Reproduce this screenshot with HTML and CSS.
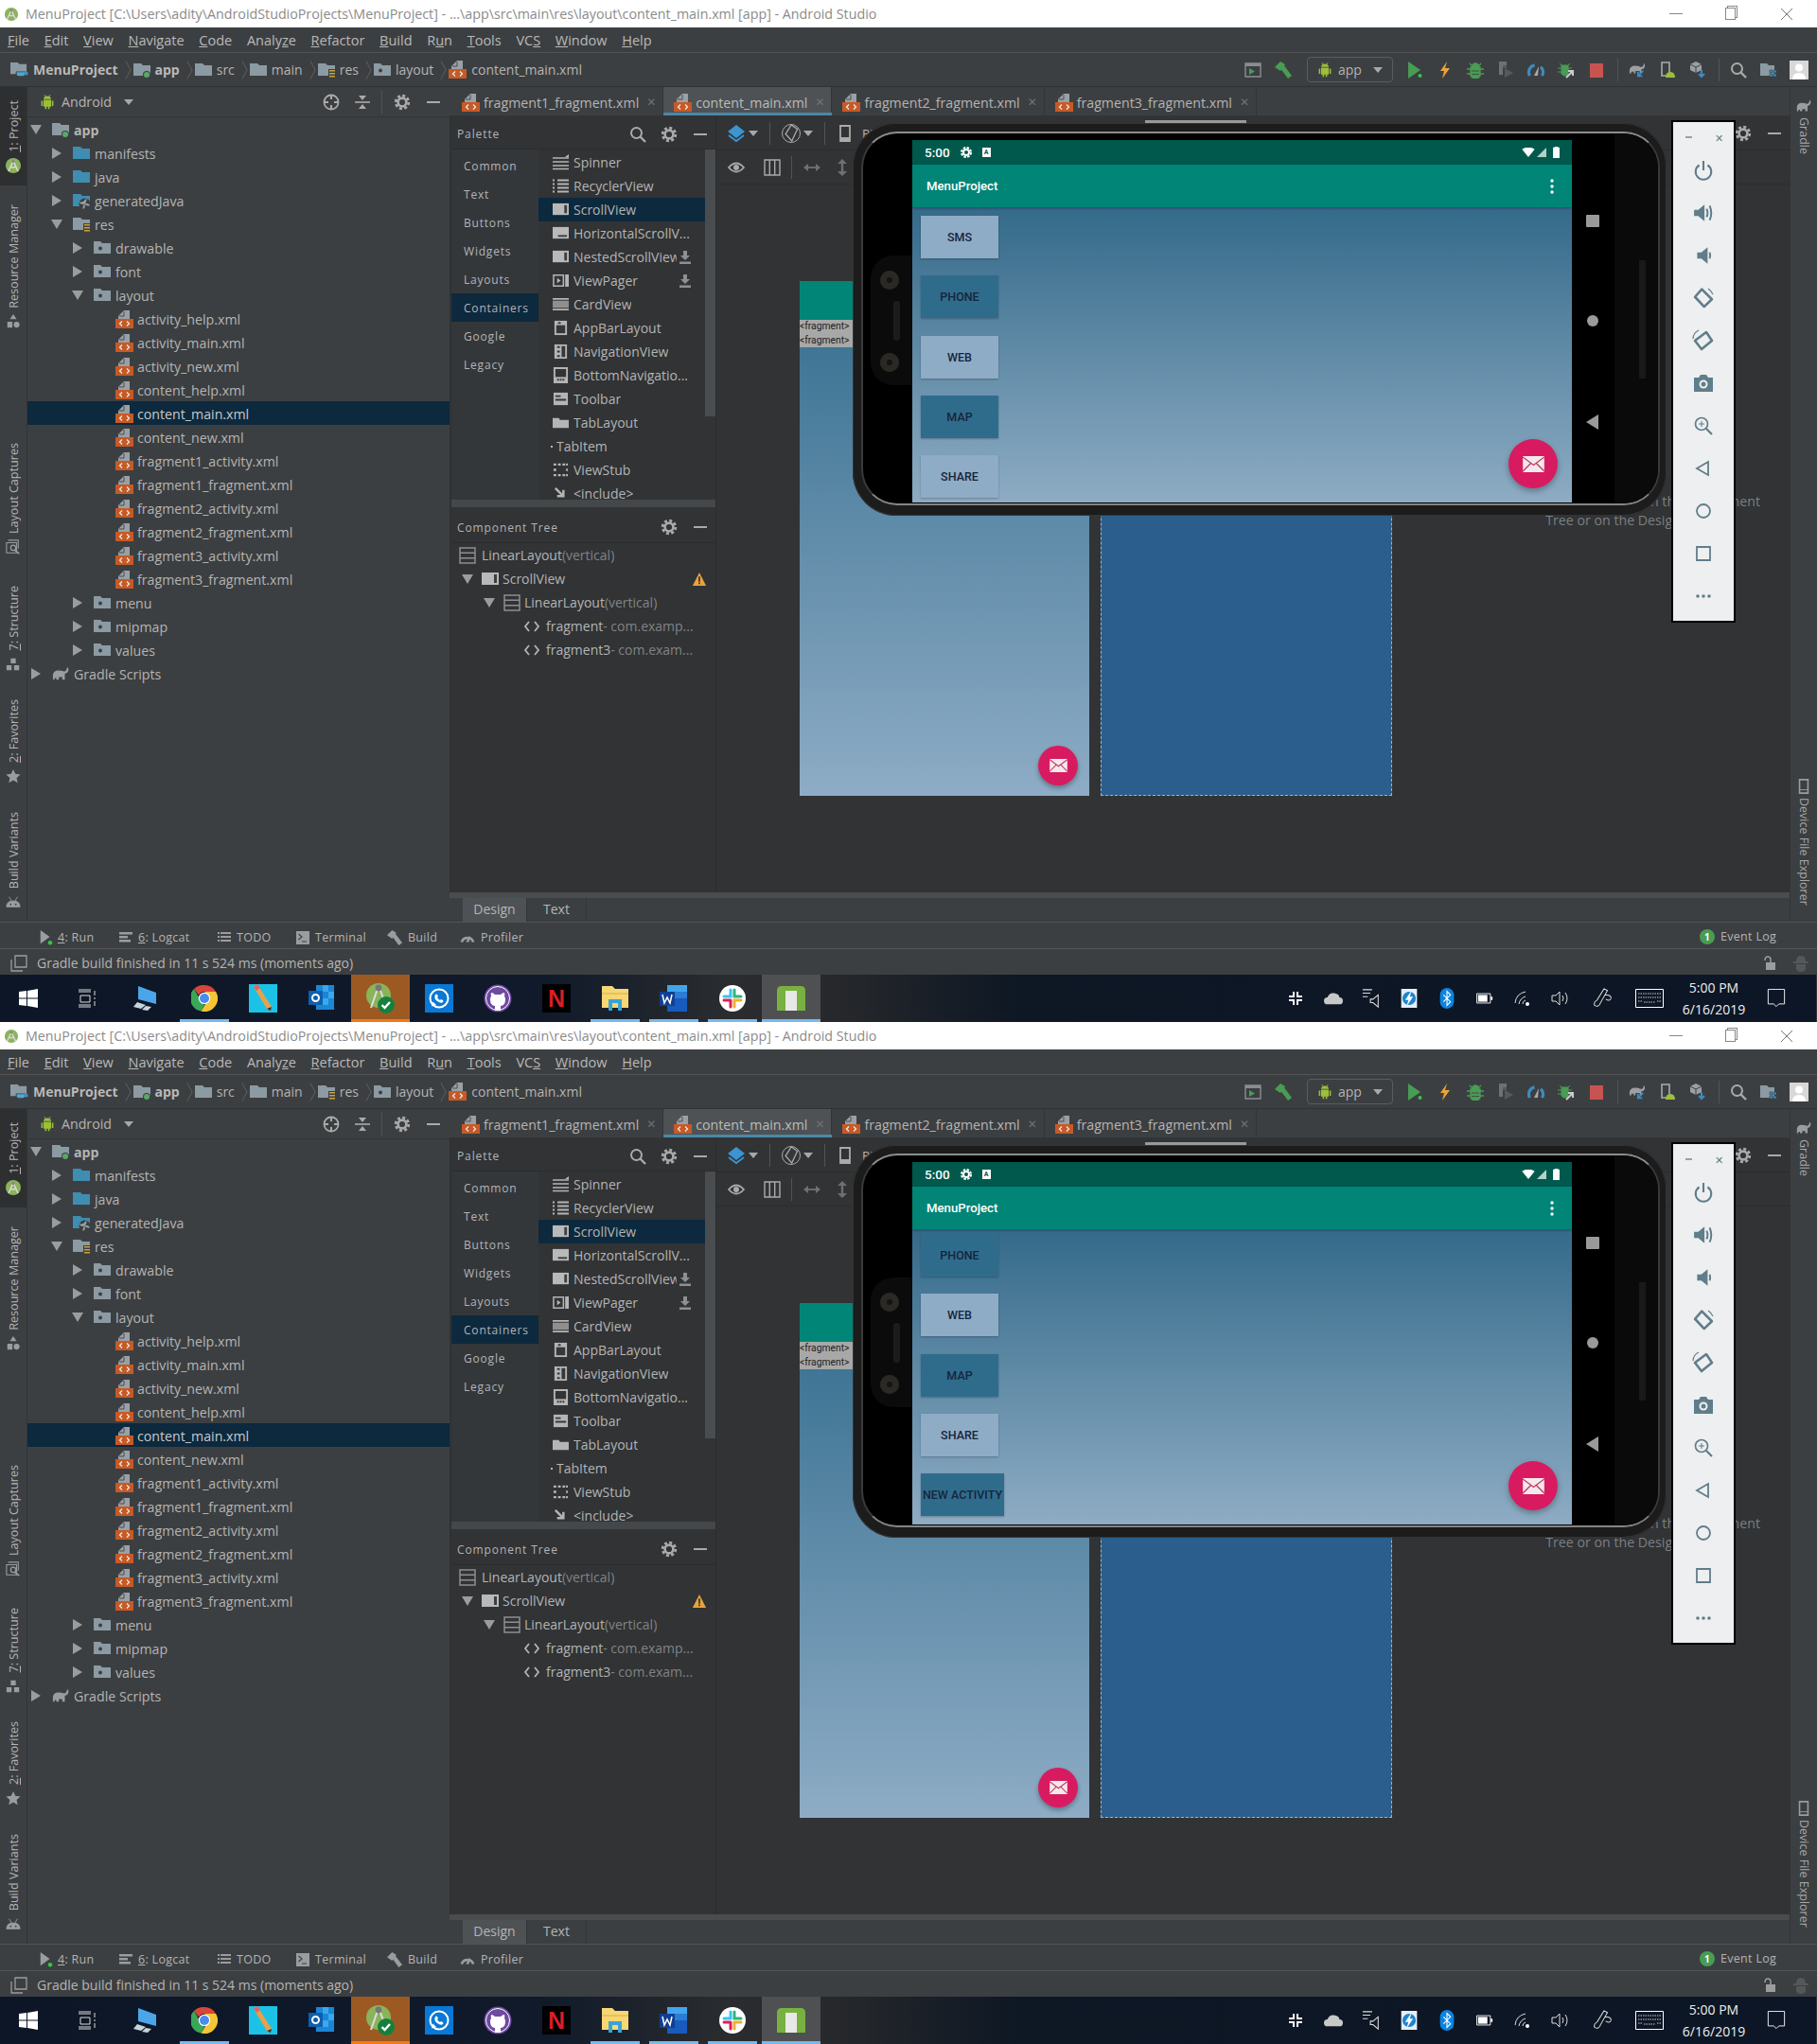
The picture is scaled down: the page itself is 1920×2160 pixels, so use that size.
FILE: index.html
```html
<!DOCTYPE html>
<html lang="en">
<head>
<meta charset="utf-8">
<title>Android Studio</title>
<link rel="stylesheet" href="styles.css">
</head>
<body>
<svg class="sprite" xmlns="http://www.w3.org/2000/svg">
<symbol id="xml" viewBox="0 0 19 19"><path d="M9 0h6v9H3V6z" fill="#9aa1a6"/><path d="M9 1v5H4" fill="none" stroke="#4a4d4f"/><path d="M0 9h19v10H0z" fill="#c65a26"/><path d="M7 11.500 4.500 14 7 16.500M12 11.500 14.500 14 12 16.500" fill="none" stroke="#eee" stroke-width="1.200"/></symbol>
<symbol id="fgray" viewBox="0 0 18 18"><path d="M0 2h8l2 2h8v11H0z" fill="#8c9aa3"/></symbol>
<symbol id="fblue" viewBox="0 0 18 18"><path d="M0 2h8l2 2h8v11H0z" fill="#3f8db0"/></symbol>
<symbol id="fdot" viewBox="0 0 18 18"><path d="M0 2h7l2 2h9v11H0z" fill="#8c9aa3"/><circle cx="7" cy="9.500" r="2" fill="#3c3f41"/></symbol>
<symbol id="fres" viewBox="0 0 18 18"><path d="M0 2h8l2 2h8v11H0z" fill="#8c9aa3"/><path d="M11 8h8v10h-8z" fill="#3c3f41"/><path d="M12 9h6v1.600h-6zM12 12h6v1.600h-6zM12 15h6v1.600h-6z" fill="#c9a23a"/></symbol>
<symbol id="fapp" viewBox="0 0 18 18"><path d="M0 2h8l2 2h8v11H0z" fill="#8c9aa3"/><circle cx="14" cy="14" r="4" fill="#3c3f41"/><circle cx="14" cy="14" r="3" fill="#59a869"/></symbol>
<symbol id="fproj" viewBox="0 0 20 18"><path d="M0 1h8l2 2h8v11H0z" fill="#8c9aa3"/><path d="M6 11h11v3q0 3-3 3H9q-3 0-3-3z" fill="#3c3f41"/><path d="M7 12h9v2q0 2-2 2H9q-2 0-2-2z" fill="#4ea6d4"/><path d="M15 12.500h4v2h-3" fill="none" stroke="#4ea6d4"/></symbol>
<symbol id="fgen" viewBox="0 0 18 18"><path d="M0 2h8l2 2h8v11H0z" fill="#3f8db0"/><circle cx="12.500" cy="12.500" r="6" fill="#3c3f41"/><path d="M12.500 12.500c-1-3 0-5 2-5.500-.2 2 0 4-2 5.500zM12.500 12.500c3-1 5 0 5.500 2-2-.2-4 0-5.500-2zM12.500 12.500c1 3 0 5-2 5.500.2-2 0-4 2-5.500zM12.500 12.500c-3 1-5 0-5.500-2 2 .2 4 0 5.500-2z" fill="#9aa1a6"/></symbol>
<symbol id="ar" viewBox="0 0 12 12"><path d="M1 0l10 6-10 6z" fill="#9a9da0"/></symbol>
<symbol id="ad" viewBox="0 0 12 12"><path d="M0 1h12L6 11z" fill="#9a9da0"/></symbol>
<symbol id="caret" viewBox="0 0 12 12"><path d="M1 3h10L6 9z" fill="#a8a8a8"/></symbol>
<symbol id="droid" viewBox="0 0 18 20"><path d="M1 8h2v7H1zM15 8h2v7h-2zM4 7h10v9h-2v3h-2v-3H8v3H6v-3H4zM4 6q.500-4 5-4t5 4z" fill="#9bbf3b"/><path d="M5 0l2 3M13 0l-2 3" stroke="#9bbf3b"/></symbol>
<symbol id="droidg" viewBox="0 0 18 14"><path d="M1 13q0-7 8-7t8 7zM4 1l3 5M14 1l-3 5" fill="#9a9da0" stroke="#9a9da0"/><circle cx="6" cy="10" r="1" fill="#3c3f41"/><circle cx="12" cy="10" r="1" fill="#3c3f41"/></symbol>
<symbol id="target" viewBox="0 0 18 18"><circle cx="9" cy="9" r="7.500" fill="none" stroke="#aaa" stroke-width="1.800"/><path d="M9 1v5M9 12v5M1 9h5M12 9h5" stroke="#aaa" stroke-width="2"/></symbol>
<symbol id="collapse" viewBox="0 0 18 18"><path d="M1 9h16" stroke="#aaa" stroke-width="1.600"/><path d="M9 7 5 2h8zM9 11l-4 5h8z" fill="#aaa"/></symbol>
<symbol id="gear" viewBox="0 0 18 18"><circle cx="9" cy="9" r="4.400" fill="none" stroke="#aaa" stroke-width="2.600"/><circle cx="9" cy="9" r="6.800" fill="none" stroke="#aaa" stroke-width="2.800" stroke-dasharray="3 2.340"/></symbol>
<symbol id="minus" viewBox="0 0 18 18"><path d="M2 8h14v2H2z" fill="#aaa"/></symbol>
<symbol id="search" viewBox="0 0 18 18"><circle cx="7.500" cy="7.500" r="5.500" fill="none" stroke="#aaa" stroke-width="2"/><path d="M11.500 11.500 17 17" stroke="#aaa" stroke-width="2.400"/></symbol>
<symbol id="runwin" viewBox="0 0 18 18"><path d="M1 2h16v14H1z" fill="none" stroke="#8a8d90" stroke-width="1.400"/><path d="M1 2h16v3H1z" fill="#8a8d90"/><path d="M5 7l6 3.500L5 14z" fill="#499c54"/></symbol>
<symbol id="hammer" viewBox="0 0 18 18"><path d="M0 6 6 0l5 3-5 7z" fill="#499c54"/><path d="M5 6 9 3l9 12-4 3z" fill="#499c54"/></symbol>
<symbol id="hammer2" viewBox="0 0 18 18"><path d="M0 6 6 0l5 3-5 7z" fill="#9a9da0"/><path d="M5 6 9 3l9 12-4 3z" fill="#9a9da0"/></symbol>
<symbol id="run" viewBox="0 0 18 18"><path d="M2 0l13 9-13 9z" fill="#499c54"/><circle cx="14.500" cy="15" r="3" fill="#3c3f41"/><circle cx="14.500" cy="15" r="2" fill="#2ecc40"/></symbol>
<symbol id="run4" viewBox="0 0 18 18"><path d="M2 0l11 8-11 8z" fill="#9a9da0"/><circle cx="13.500" cy="15" r="2.500" fill="#2ecc40"/></symbol>
<symbol id="bolt" viewBox="0 0 18 18"><path d="M11 0 4 10h4l-2 8 8-11H9z" fill="#eba43a"/></symbol>
<symbol id="bug" viewBox="0 0 18 18"><path d="M4 6h10v9q-1.500 3-5 3t-5-3zM5.500 5q1-3 3.500-3t3.500 3zM0 8h4M14 8h4M0 13h4M14 13h4M3 2l3 3M15 2l-3 3" fill="#499c54" stroke="#499c54" stroke-width="1.300"/><path d="M5 10h8M5 13.500h8" stroke="#3c3f41" stroke-width=".8"/></symbol>
<symbol id="cover" viewBox="0 0 18 18"><path d="M2 0h8v4H6v10H2z" fill="#6e7174"/><path d="M8 7l9 5-9 5z" fill="#56595b"/><path d="M6 4h4v3H6z" fill="#56595b"/></symbol>
<symbol id="gauge" viewBox="0 0 18 18"><path d="M2.500 15A7.500 7.500 0 1 1 15.500 15" fill="none" stroke="#3d8cc0" stroke-width="3.200" stroke-dasharray="14 7 20"/><path d="M7 15 12 5l-1 10z" fill="#aaa"/></symbol>
<symbol id="gauge2" viewBox="0 0 18 18"><path d="M2 14a7.500 7.500 0 0 1 14 0" fill="none" stroke="#9a9da0" stroke-width="3"/><path d="M7 14 12 6l-1 8z" fill="#9a9da0"/></symbol>
<symbol id="attach" viewBox="0 0 18 18"><path d="M4 4h7v9q-1 2-3.500 2T4 13zM0 7h4M11 7h4M0 11h4M2 2l3 3M13 2l-3 3" fill="#499c54" stroke="#499c54"/><path d="M9 17l6-6M11 10h5v5" fill="none" stroke="#ccc" stroke-width="2"/></symbol>
<symbol id="stop" viewBox="0 0 18 18"><path d="M2 2h14v15H2z" fill="#c75450"/></symbol>
<symbol id="gsync" viewBox="0 0 20 18"><path d="M1 13V9q1-5 6-5t6 1q3 1 4-1l1-3q1 1 1 4-1 3-4 3v5h-2v-3H8v3H6v-2H3v2z" fill="#9da0a3"/><path d="M17 10l-6 6M11 11v5h5" fill="none" stroke="#3d8cc0" stroke-width="2"/></symbol>
<symbol id="avd" viewBox="0 0 18 18"><path d="M3 1h8v14H3z" fill="none" stroke="#aaa" stroke-width="1.600"/><path d="M7 17q0-6 5-6t5 6zM9 9l1 2M15 9l-1 2" fill="#9bbf3b"/></symbol>
<symbol id="sdk" viewBox="0 0 18 18"><path d="M7 0l6 3v6l-6 3-6-3V3z" fill="#9da0a3"/><path d="M7 6v6M1 3l6 3 6-3" stroke="#3c3f41" fill="none"/><path d="M13 9v7M10 13l3 3 3-3" fill="none" stroke="#3d8cc0" stroke-width="2"/></symbol>
<symbol id="pstruct" viewBox="0 0 18 18"><path d="M0 2h7l2 2h6v11H0z" fill="#8c9aa3"/><path d="M10 9h3v3h-3zM14 9h3v3h-3zM10 13h3v3h-3zM14 13h3v3h-3z" fill="#3d8cc0" stroke="#3c3f41" stroke-width=".6"/></symbol>
<symbol id="user" viewBox="0 0 20 20"><path d="M0 0h20v20H0z" fill="#d8d8d8"/><circle cx="10" cy="7.500" r="4" fill="#fff"/><path d="M3 20q0-7 7-7t7 7z" fill="#fff"/></symbol>
<symbol id="as" viewBox="0 0 18 18"><circle cx="9" cy="9" r="8" fill="#8bb35b"/><path d="M9 4 4 15M9 4l5 11M6 10q3 2 6 0" fill="none" stroke="#d8d8d8" stroke-width="1.600"/><circle cx="9" cy="4.500" r="1.700" fill="#888"/></symbol>
<symbol id="resm" viewBox="0 0 18 18"><path d="M9 0l4 6H5z" fill="#9a9da0"/><path d="M2 9h6v7H2z" fill="#9a9da0"/><circle cx="13" cy="12.500" r="3.500" fill="#9a9da0"/></symbol>
<symbol id="capt" viewBox="0 0 18 18"><path d="M3 1h12v10M1 4h12v12H1z" fill="none" stroke="#9a9da0" stroke-width="1.200"/><circle cx="9" cy="10" r="3" fill="#3c3f41" stroke="#9a9da0" stroke-width="1.400"/><path d="M11 13l5 4" stroke="#9a9da0" stroke-width="2"/></symbol>
<symbol id="struct" viewBox="0 0 18 18"><path d="M6 2h6v6H6zM1 10h6v6H1zM10 10h6v6h-6z" fill="#9a9da0"/></symbol>
<symbol id="star" viewBox="0 0 18 18"><path d="M9 1l2.500 5.500 6 .7-4.500 4 1.300 6L9 14.200 3.700 17.200 5 11.200l-4.500-4 6-.7z" fill="#9a9da0"/></symbol>
<symbol id="gele" viewBox="0 0 20 16"><path d="M1 15V9q1-5 6-5t6 1q3 1 4-2l1-3q2 2 1 5-1 3-4 3v7h-3v-3H8v3H5v-2H3v2z" fill="#9a9da0"/></symbol>
<symbol id="devex" viewBox="0 0 18 18"><path d="M4 1h10v16H4z" fill="none" stroke="#9a9da0" stroke-width="1.800"/><path d="M4 13h10" stroke="#9a9da0"/></symbol>
<symbol id="spin" viewBox="0 0 17 17"><path d="M0 4h17M0 8h17M0 12h17M0 15.500h17" stroke="#b5b5b5" stroke-width="1.600"/><path d="M17 0v3h-4z" fill="#b5b5b5"/></symbol>
<symbol id="recy" viewBox="0 0 17 17"><path d="M5 2.500h12M5 6.500h12M5 10.500h12M5 14.500h12" stroke="#b5b5b5" stroke-width="2"/><path d="M0 1.500h2v2H0zM0 5.500h2v2H0zM0 9.500h2v2H0zM0 13.500h2v2H0z" fill="#b5b5b5"/></symbol>
<symbol id="scroll" viewBox="0 0 18 18"><path d="M0 2h18v13H0z" fill="#b9b9b9"/><path d="M13 4h3v9h-3z" fill="#3c3f41"/></symbol>
<symbol id="hscr" viewBox="0 0 18 18"><path d="M0 2h18v13H0z" fill="#b9b9b9"/><path d="M6 11h10v2H6z" fill="#3c3f41"/></symbol>
<symbol id="vpag" viewBox="0 0 18 18"><path d="M1 3h11v12H1z" fill="none" stroke="#b5b5b5" stroke-width="1.600"/><path d="M5 6l4 3-4 3zM14 2h4v14h-4z" fill="#b5b5b5"/></symbol>
<symbol id="card" viewBox="0 0 18 18"><path d="M0 2h18v2H0zM0 14h18v2H0z" fill="#b5b5b5"/><path d="M0 5h18v8H0z" fill="#8d8f91"/></symbol>
<symbol id="abar" viewBox="0 0 18 18"><path d="M2 1h14v16H2z" fill="#b5b5b5"/><path d="M4 6h10v9H4z" fill="#35383a"/><path d="M6 2.500h3v2H6z" fill="#35383a"/></symbol>
<symbol id="navv" viewBox="0 0 18 18"><path d="M2 1h14v16H2z" fill="#b5b5b5"/><path d="M5 3h3v2H5zM5 8h3v2H5zM5 13h3v2H5zM10 3h4v12h-4z" fill="#35383a"/></symbol>
<symbol id="bnav" viewBox="0 0 18 18"><path d="M2 1h14v16H2z" fill="none" stroke="#b5b5b5" stroke-width="2"/><path d="M2 11h14v6H2z" fill="#b5b5b5"/><path d="M5 13h2v2H5zM8 13h2v2H8zM11 13h2v2h-2z" fill="#35383a"/></symbol>
<symbol id="tbar" viewBox="0 0 18 18"><path d="M1 2h16v14H1z" fill="#b5b5b5"/><path d="M3 5h6v2H3zM3 9h12v2H3z" fill="#35383a"/></symbol>
<symbol id="tlay" viewBox="0 0 18 18"><path d="M0 4h7l1 2h10v9H0z" fill="#b5b5b5"/></symbol>
<symbol id="stub" viewBox="0 0 18 18"><path d="M1 3h3M6 3h3M11 3h3M15 3h2M1 9h3M15 9h2M1 15h3M6 15h3M11 15h3M15 15h2" stroke="#b5b5b5" stroke-width="2.400"/></symbol>
<symbol id="incl" viewBox="0 0 18 18"><path d="M3 3l9 9M12 5v7H5" fill="none" stroke="#b5b5b5" stroke-width="2.600"/></symbol>
<symbol id="dl" viewBox="0 0 14 14"><path d="M5 0h4v5h3L7 10 2 5h3zM1 11.500h12V14H1z" fill="#8d8f91"/></symbol>
<symbol id="layers" viewBox="0 0 22 22"><path d="M11 2l9 7-9 7-9-7z" fill="#3d94d0"/><path d="M3 13l8 6 8-6" fill="none" stroke="#3d94d0" stroke-width="2"/></symbol>
<symbol id="rot" viewBox="0 0 22 22"><circle cx="11" cy="11" r="9.500" fill="none" stroke="#aaa"/><path d="M5 11 12 2l6 5-7 12z" fill="#35383a" stroke="#aaa" stroke-width="1.300" transform="rotate(-5 11 11)"/></symbol>
<symbol id="phonei" viewBox="0 0 18 18"><path d="M4 1h10v16H4z" fill="none" stroke="#aaa" stroke-width="1.800"/><path d="M4 13h10v4H4z" fill="#aaa"/></symbol>
<symbol id="eye" viewBox="0 0 18 18"><path d="M1 9q8-9 16 0-8 9-16 0z" fill="none" stroke="#aaa" stroke-width="1.800"/><circle cx="9" cy="9" r="3" fill="#aaa"/></symbol>
<symbol id="cols" viewBox="0 0 18 18"><path d="M1 1h16v16H1zM6.300 1v16M11.700 1v16" fill="none" stroke="#aaa" stroke-width="1.400"/></symbol>
<symbol id="hh" viewBox="0 0 18 18"><path d="M3 9h12" stroke="#6e7174" stroke-width="1.800"/><path d="M0 9l5-4v8zM18 9l-5-4v8z" fill="#6e7174"/></symbol>
<symbol id="vv" viewBox="0 0 18 18"><path d="M9 3v12" stroke="#6e7174" stroke-width="2.400"/><path d="M9 0l5 5H4zM9 18l5-5H4z" fill="#6e7174"/></symbol>
<symbol id="lin" viewBox="0 0 18 18"><path d="M1 1h16v16H1zM1 6.300h16M1 11.700h16" fill="none" stroke="#8d8f91" stroke-width="1.500"/></symbol>
<symbol id="warn" viewBox="0 0 18 18"><path d="M9 1l8 16H1z" fill="#e8a33a"/><path d="M8 6h2v6H8zM8 13h2v2H8z" fill="#35383a"/></symbol>
<symbol id="code" viewBox="0 0 18 18"><path d="M6 4 2 9l4 5M12 4l4 5-4 5" fill="none" stroke="#b5b5b5" stroke-width="1.800"/></symbol>
<symbol id="logcat" viewBox="0 0 14 14"><path d="M0 1h14v2.500H0zM0 5h9v2.500H0zM0 9h12v2.500H0z" fill="#9a9da0"/></symbol>
<symbol id="todo" viewBox="0 0 14 14"><path d="M0 1h2v2H0zM0 5h2v2H0zM0 9h2v2H0zM3 1h11v2H3zM3 5h11v2H3zM3 9h11v2H3z" fill="#9a9da0"/></symbol>
<symbol id="term" viewBox="0 0 14 14"><path d="M0 0h14v14H0z" fill="#9a9da0"/><path d="M2.500 3 6 6 2.500 9M6 11h5" fill="none" stroke="#3c3f41" stroke-width="1.200"/></symbol>
<symbol id="frame" viewBox="0 0 18 18"><path d="M5 1h12v12H5z" fill="none" stroke="#9a9da0" stroke-width="1.300"/><path d="M1 5v12h12" fill="none" stroke="#9a9da0" stroke-width="1.300"/></symbol>
<symbol id="lock" viewBox="0 0 14 16"><path d="M2 7h10v8H2z" fill="#9a9da0"/><path d="M1 5q0-4 3-4t3 3v3" fill="none" stroke="#9a9da0" stroke-width="1.500"/></symbol>
<symbol id="hector" viewBox="0 0 16 18"><path d="M3 7q0-6 5-6t5 6h3v2H0V7zM3 10h10v5q-1 3-5 3t-5-3z" fill="#55585a"/></symbol>
<symbol id="wx" viewBox="0 0 14 14"><path d="M1 1l12 12M13 1 1 13" stroke="#777" fill="none"/></symbol>
<symbol id="mail" viewBox="0 0 24 18"><path d="M0 0h24v18H0z" fill="#f3e9ec"/><path d="M0 1l12 9 12-9M0 17l9-9M24 17l-9-9" fill="none" stroke="#c2345f" stroke-width="1.300"/></symbol>
<symbol id="win" viewBox="0 0 20 20"><path d="M0 3l8-1v7.500H0zM9 2l11-2v9.500H9zM0 10.500h8V18l-8-1zM9 10.500h11V20L9 18z" fill="#fff"/></symbol>
<symbol id="tview" viewBox="0 0 20 20"><path d="M1 1h13M1 3h13M3 7h10v7H3zM1 17h13M1 19h13M18 2v5M18 9v2M18 13v5" fill="none" stroke="#ddd"/></symbol>
<symbol id="pc" viewBox="0 0 28 28"><path d="M6 1l19 7v12L6 15z" fill="#4aa6e8"/><path d="M5 18l9 3-5 4-8-2zM14 22l6 1-4 4-6-1z" fill="#c8d4dc"/></symbol>
<symbol id="chrome" viewBox="0 0 28 28"><path d="M14 0a14 14 0 0 1 12.100 7H14a7 7 0 0 0-6.100 3.500L3 4a14 14 0 0 1 11-4z" fill="#d9453a"/><path d="M3 4l7 12.200A7 7 0 0 0 14 21l-3.500 6.600A14 14 0 0 1 3 4z" fill="#3aa757"/><path d="M26.100 7A14 14 0 0 1 10.500 27.600L17 17a7 7 0 0 0-3-10z" fill="#f4c534"/><circle cx="14" cy="14" r="6.200" fill="#fff"/><circle cx="14" cy="14" r="5" fill="#4a8bef"/></symbol>
<symbol id="pencil" viewBox="0 0 30 30"><path d="M0 0h30v30H0z" fill="#1cc2e6"/><path d="M5 3l4-3 15 24-1 4-4-2z" fill="#e8a04c"/><path d="M5 3l4-3 3 4-4 3z" fill="#d66"/><path d="M23 28l-4-2 5-2z" fill="#333"/></symbol>
<symbol id="outl" viewBox="0 0 30 30"><path d="M9 1h19v26H9z" fill="#1a86d8"/><path d="M16 1h6v7h-6zM22 8h6v7h-6zM16 15h6v7h-6z" fill="#3aa8ec"/><path d="M1 7h15v15H1z" fill="#0f5fae"/><circle cx="8.500" cy="14.500" r="3.500" fill="none" stroke="#fff" stroke-width="2"/></symbol>
<symbol id="astudio" viewBox="0 0 30 34"><circle cx="13" cy="15" r="13" fill="#8bb35b"/><path d="M13 5 5 28M13 5l7 18" fill="none" stroke="#ddd" stroke-width="2"/><circle cx="13" cy="7" r="3.400" fill="#777"/><circle cx="21" cy="25" r="9" fill="#15803d"/><path d="M16.500 25l3 3 5.500-6" fill="none" stroke="#fff" stroke-width="2.400"/></symbol>
<symbol id="wa" viewBox="0 0 30 30"><path d="M0 0h30v30H0z" fill="#0a78d4"/><circle cx="15" cy="15" r="9.500" fill="none" stroke="#fff" stroke-width="2"/><path d="M7 23.500l1.500-5 3.500 3.500zM11 11q1-1 2 0l1 2-1 1q1 2 3 3l1-1 2 1q1 1 0 2-2 2-6-1-4-3-2-7z" fill="#fff"/></symbol>
<symbol id="ghub" viewBox="0 0 30 30"><circle cx="15" cy="15" r="14.500" fill="#6e4aa0"/><circle cx="15" cy="15" r="12.500" fill="none" stroke="#fff" stroke-width="1"/><path d="M12 28v-5q-5 0-5-7 0-2 1-3-.5-2 0-4 2 0 4 2h6q2-2 4-2 .5 2 0 4 1 1 1 3 0 7-5 7v5z" fill="#fff"/></symbol>
<symbol id="expl" viewBox="0 0 30 30"><path d="M1 2h11l3 3h14v20H1z" fill="#f7d774"/><path d="M1 9h28v2H1z" fill="#e8c25a"/><path d="M8 28V16h14v12h-4v-8h-6v8z" fill="#3aa3d6"/></symbol>
<symbol id="word" viewBox="0 0 30 30"><path d="M8 1h21v28H8z" fill="#185abd"/><path d="M8 1h21v7H8z" fill="#41a5ee"/><path d="M8 8h21v7H8z" fill="#2b7cd3"/><path d="M0 8h16v15H0z" fill="#103f91"/><path d="M3 11l2 9 3-6 3 6 2-9" fill="none" stroke="#fff" stroke-width="1.500"/></symbol>
<symbol id="slack" viewBox="0 0 30 30"><circle cx="15" cy="15" r="14" fill="#fff"/><path d="M6 17h7M13 24v-7" stroke="#e01e5a" stroke-width="3" stroke-linecap="round" fill="none"/><path d="M13 6v7H6" stroke="#36c5f0" stroke-width="3" stroke-linecap="round" fill="none"/><path d="M24 13h-7V6" stroke="#2eb67d" stroke-width="3" stroke-linecap="round" fill="none"/><path d="M17 24v-7h7" stroke="#ecb22e" stroke-width="3" stroke-linecap="round" fill="none"/></symbol>
<symbol id="door" viewBox="0 0 30 26"><path d="M0 5q0-5 5-5h20q5 0 5 5v21H0z" fill="#78b13f"/><path d="M9 26V5h12v21z" fill="#e8e8e8"/></symbol>
<symbol id="tslack" viewBox="0 0 16 16"><path d="M6 1v5H1M6 15v-5H1M10 1v5h5M10 15v-5h5" stroke="#fff" stroke-width="2" fill="none"/></symbol>
<symbol id="cloud" viewBox="0 0 22 16"><path d="M4 15q-4 0-4-4t4-4q2-6 8-5t6 5q4 0 4 4t-4 4z" fill="#c8c8c8"/></symbol>
<symbol id="alist" viewBox="0 0 20 22"><path d="M0 1h11M0 5h9M0 9h6M9 12h3l6-5v14l-6-5H9z" fill="none" stroke="#ddd" stroke-width="1.200"/></symbol>
<symbol id="tbolt" viewBox="0 0 20 24"><path d="M0 0h20v24H0z" fill="#e8eef3"/><circle cx="10" cy="12" r="8.500" fill="#1a85d6"/><path d="M13 2 5 14h4l-2 8 8-12h-4z" fill="#fff"/></symbol>
<symbol id="bt" viewBox="0 0 16 24"><rect width="16" height="24" rx="8" fill="#0a84e0"/><path d="M4 8l8 8-4 4V4l4 4-8 8" fill="none" stroke="#fff" stroke-width="1.200"/></symbol>
<symbol id="batt" viewBox="0 0 20 12"><path d="M.5.500h16v11H.500z" fill="none" stroke="#fff"/><path d="M2 2h11v8H2z" fill="#fff"/><path d="M17 4h2v4h-2z" fill="#fff"/></symbol>
<symbol id="wifi" viewBox="0 0 18 18"><path d="M1 14q1-10 11-12M5 15q1-6 7-8M9 15q0-3 3-4" fill="none" stroke="#ddd"/><circle cx="14" cy="15" r="2" fill="#fff"/></symbol>
<symbol id="vol" viewBox="0 0 20 18"><path d="M1 6h4l4-4v14l-4-4H1z" fill="none" stroke="#ddd"/><path d="M12 6q2 3 0 6M15 3q4 6 0 12" fill="none" stroke="#ddd"/></symbol>
<symbol id="pen" viewBox="0 0 22 24"><path d="M1 20q-1-4 3-6l8-13 4 2-8 14q-2 6-7 3zM13 8q8 0 7 4t-6 1" fill="none" stroke="#ddd" stroke-width="1.100"/></symbol>
<symbol id="kbd" viewBox="0 0 30 20"><path d="M.5.500h29v19H.500z" fill="none" stroke="#fff"/><path d="M3 5h24M3 9h24M3 13h4M9 14h12M23 13h4" stroke="#ccc" stroke-dasharray="1.500 1"/></symbol>
<symbol id="notif" viewBox="0 0 20 22"><path d="M.5.500h19v17H13l-3 3-3-3H.500z" fill="none" stroke="#fff"/></symbol>
<symbol id="power" viewBox="0 0 20 20"><path d="M6 5a7.500 7.500 0 1 0 8 0M10 1v9" fill="none" stroke="#607d8b" stroke-width="1.900"/></symbol>
<symbol id="volu" viewBox="0 0 20 20"><path d="M1 7h4l6-5v16l-6-5H1z" fill="#607d8b"/><path d="M13 6q2 4 0 8M16 3q3 7 0 14" fill="none" stroke="#607d8b" stroke-width="1.800"/></symbol>
<symbol id="vold" viewBox="0 0 20 20"><path d="M4 7h4l6-5v16l-6-5H4z" fill="#607d8b"/><path d="M16 7q1 3 0 6" fill="none" stroke="#607d8b" stroke-width="1.800"/></symbol>
<symbol id="rotl" viewBox="0 0 24 24"><path d="M9 3 21 12l-7 9L3 12z" fill="none" stroke="#607d8b" stroke-width="2.600" stroke-linejoin="round" transform="rotate(8 12 12)"/><path d="M17 2q3 2 5 6" fill="none" stroke="#607d8b" stroke-width="1.200"/></symbol>
<symbol id="rotr" viewBox="0 0 24 24"><path d="M15 3 21 12l-11 9L3 12z" fill="none" stroke="#607d8b" stroke-width="2.600" stroke-linejoin="round"/><path d="M1 10q0-6 6-9" fill="none" stroke="#607d8b" stroke-width="1.200"/></symbol>
<symbol id="cam" viewBox="0 0 20 20"><path d="M0 4h5l2-3h6l2 3h5v15H0z" fill="#607d8b"/><circle cx="10" cy="11" r="4.500" fill="#eef0f2"/><circle cx="10" cy="11" r="2.500" fill="#607d8b"/></symbol>
<symbol id="zoom" viewBox="0 0 20 20"><circle cx="8" cy="8" r="6.500" fill="none" stroke="#607d8b" stroke-width="1.700"/><path d="M13 13l6 6" stroke="#607d8b" stroke-width="2.200"/><path d="M8 5v6M5 8h6" stroke="#607d8b" stroke-width="1.100"/></symbol>
<symbol id="back" viewBox="0 0 20 20"><path d="M15 3v14L3 10z" fill="none" stroke="#607d8b" stroke-width="1.800"/></symbol>
<symbol id="home" viewBox="0 0 20 20"><circle cx="10" cy="10" r="7" fill="none" stroke="#607d8b" stroke-width="1.800"/></symbol>
<symbol id="recent" viewBox="0 0 20 20"><path d="M3 3h14v14H3z" fill="none" stroke="#607d8b" stroke-width="1.800"/></symbol>
<symbol id="more" viewBox="0 0 20 20"><circle cx="4" cy="10" r="1.800" fill="#607d8b"/><circle cx="10" cy="10" r="1.800" fill="#607d8b"/><circle cx="16" cy="10" r="1.800" fill="#607d8b"/></symbol>
<symbol id="sbgear" viewBox="0 0 14 14"><circle cx="7" cy="7" r="3" fill="none" stroke="#fff" stroke-width="2"/><circle cx="7" cy="7" r="5" fill="none" stroke="#fff" stroke-width="2" stroke-dasharray="2.500 1.430"/></symbol>
<symbol id="sbwifi" viewBox="0 0 16 12"><path d="M0 2q8-5 16 0L8 12z" fill="#fff"/></symbol>
<symbol id="sbsig" viewBox="0 0 12 12"><path d="M12 0v12H0z" fill="#b5cfc9"/></symbol>
<symbol id="sbbat" viewBox="0 0 8 14"><path d="M2 0h4v1h2v13H0V1h2z" fill="#fff"/></symbol>
<symbol id="dots" viewBox="0 0 4 16"><circle cx="2" cy="2" r="1.700" fill="#fff"/><circle cx="2" cy="8" r="1.700" fill="#fff"/><circle cx="2" cy="14" r="1.700" fill="#fff"/></symbol>
</svg>

<section class="window">
<header class="titlebar"><svg class="ic16"><use href="#as"/></svg><span class="title-text">MenuProject [C:\Users\adity\AndroidStudioProjects\MenuProject] - ...\app\src\main\res\layout\content_main.xml [app] - Android Studio</span><div class="winctl"><span class="wc-min"></span><span class="wc-max"></span><svg class="ic14"><use href="#wx"/></svg></div></header>
<nav class="menubar"><span><u>F</u>ile</span><span><u>E</u>dit</span><span><u>V</u>iew</span><span><u>N</u>avigate</span><span><u>C</u>ode</span><span>Analy<u>z</u>e</span><span><u>R</u>efactor</span><span><u>B</u>uild</span><span>R<u>u</u>n</span><span><u>T</u>ools</span><span>VC<u>S</u></span><span><u>W</u>indow</span><span><u>H</u>elp</span></nav>
<div class="navbar">
<div class="crumbs"><svg class="ic19"><use href="#fproj"/></svg><b>MenuProject</b><i class="chev"></i><svg class="ic18"><use href="#fapp"/></svg><b>app</b><i class="chev"></i><svg class="ic18"><use href="#fgray"/></svg><span>src</span><i class="chev"></i><svg class="ic18"><use href="#fgray"/></svg><span>main</span><i class="chev"></i><svg class="ic18"><use href="#fres"/></svg><span>res</span><i class="chev"></i><svg class="ic18"><use href="#fdot"/></svg><span>layout</span><i class="chev"></i><svg class="ic19"><use href="#xml"/></svg><span>content_main.xml</span></div>
<div class="tools"><span class="slot"><svg class="ic18"><use href="#runwin"/></svg></span><span class="slot"><svg class="ic18"><use href="#hammer"/></svg></span><span class="appbox"><svg class="ic16"><use href="#droid"/></svg><span>app</span><svg class="ic12"><use href="#caret"/></svg></span><span class="slot"><svg class="ic18"><use href="#run"/></svg></span><span class="slot"><svg class="ic18"><use href="#bolt"/></svg></span><span class="slot"><svg class="ic18"><use href="#bug"/></svg></span><span class="slot"><svg class="ic18"><use href="#cover"/></svg></span><span class="slot"><svg class="ic18"><use href="#gauge"/></svg></span><span class="slot"><svg class="ic18"><use href="#attach"/></svg></span><span class="slot"><svg class="ic18"><use href="#stop"/></svg></span><i class="tsep"></i><span class="slot"><svg class="ic18"><use href="#gsync"/></svg></span><span class="slot"><svg class="ic18"><use href="#avd"/></svg></span><span class="slot"><svg class="ic18"><use href="#sdk"/></svg></span><i class="tsep"></i><span class="slot"><svg class="ic18"><use href="#search"/></svg></span><span class="slot"><svg class="ic18"><use href="#pstruct"/></svg></span><span class="slot"><svg class="ic20"><use href="#user"/></svg></span></div>
</div>
<div class="workspace">
<aside class="stripe-left">
<div class="sitem active"><span class="vtext"><u>1</u>: Project</span><svg class="ic18"><use href="#as"/></svg></div>
<div class="sitem"><span class="vtext">Resource Manager</span><svg class="ic16"><use href="#resm"/></svg></div>
<div class="sitem"><span class="vtext">Layout Captures</span><svg class="ic16"><use href="#capt"/></svg></div>
<div class="sitem"><span class="vtext"><u>7</u>: Structure</span><svg class="ic16"><use href="#struct"/></svg></div>
<div class="sitem"><span class="vtext"><u>2</u>: Favorites</span><svg class="ic16"><use href="#star"/></svg></div>
<div class="sitem"><span class="vtext">Build Variants</span><svg class="ic16"><use href="#droidg"/></svg></div>
</aside>
<section class="project">
<div class="proj-head"><svg class="ic16 a-icon"><use href="#droid"/></svg><span class="proj-name">Android</span><svg class="ic12"><use href="#caret"/></svg><div class="proj-tools"><svg class="ic18"><use href="#target"/></svg><svg class="ic18"><use href="#collapse"/></svg><i class="hsep"></i><svg class="ic18"><use href="#gear"/></svg><svg class="ic18"><use href="#minus"/></svg></div></div>
<div class="tree">
<div class="row l0"><svg class="arrow"><use href="#ad"/></svg><svg class="ic18"><use href="#fapp"/></svg><b>app</b></div>
<div class="row l1"><svg class="arrow"><use href="#ar"/></svg><svg class="ic18"><use href="#fblue"/></svg><span>manifests</span></div>
<div class="row l1"><svg class="arrow"><use href="#ar"/></svg><svg class="ic18"><use href="#fblue"/></svg><span>java</span></div>
<div class="row l1"><svg class="arrow"><use href="#ar"/></svg><svg class="ic18"><use href="#fgen"/></svg><span>generatedJava</span></div>
<div class="row l1"><svg class="arrow"><use href="#ad"/></svg><svg class="ic18"><use href="#fres"/></svg><span>res</span></div>
<div class="row l2"><svg class="arrow"><use href="#ar"/></svg><svg class="ic18"><use href="#fdot"/></svg><span>drawable</span></div>
<div class="row l2"><svg class="arrow"><use href="#ar"/></svg><svg class="ic18"><use href="#fdot"/></svg><span>font</span></div>
<div class="row l2"><svg class="arrow"><use href="#ad"/></svg><svg class="ic18"><use href="#fdot"/></svg><span>layout</span></div>
<div class="row l3"><svg class="ic19"><use href="#xml"/></svg><span>activity_help.xml</span></div>
<div class="row l3"><svg class="ic19"><use href="#xml"/></svg><span>activity_main.xml</span></div>
<div class="row l3"><svg class="ic19"><use href="#xml"/></svg><span>activity_new.xml</span></div>
<div class="row l3"><svg class="ic19"><use href="#xml"/></svg><span>content_help.xml</span></div>
<div class="row l3 sel"><svg class="ic19"><use href="#xml"/></svg><span>content_main.xml</span></div>
<div class="row l3"><svg class="ic19"><use href="#xml"/></svg><span>content_new.xml</span></div>
<div class="row l3"><svg class="ic19"><use href="#xml"/></svg><span>fragment1_activity.xml</span></div>
<div class="row l3"><svg class="ic19"><use href="#xml"/></svg><span>fragment1_fragment.xml</span></div>
<div class="row l3"><svg class="ic19"><use href="#xml"/></svg><span>fragment2_activity.xml</span></div>
<div class="row l3"><svg class="ic19"><use href="#xml"/></svg><span>fragment2_fragment.xml</span></div>
<div class="row l3"><svg class="ic19"><use href="#xml"/></svg><span>fragment3_activity.xml</span></div>
<div class="row l3"><svg class="ic19"><use href="#xml"/></svg><span>fragment3_fragment.xml</span></div>
<div class="row l2"><svg class="arrow"><use href="#ar"/></svg><svg class="ic18"><use href="#fdot"/></svg><span>menu</span></div>
<div class="row l2"><svg class="arrow"><use href="#ar"/></svg><svg class="ic18"><use href="#fdot"/></svg><span>mipmap</span></div>
<div class="row l2"><svg class="arrow"><use href="#ar"/></svg><svg class="ic18"><use href="#fdot"/></svg><span>values</span></div>
<div class="row l0"><svg class="arrow"><use href="#ar"/></svg><svg class="ic18"><use href="#gele"/></svg><span>Gradle Scripts</span></div>
</div>
</section>
<section class="editor">
<div class="tabs">
<div class="tab"><svg class="ic19"><use href="#xml"/></svg><span>fragment1_fragment.xml</span><em>&#10005;</em></div>
<div class="tab on"><svg class="ic19"><use href="#xml"/></svg><span>content_main.xml</span><em>&#10005;</em></div>
<div class="tab"><svg class="ic19"><use href="#xml"/></svg><span>fragment2_fragment.xml</span><em>&#10005;</em></div>
<div class="tab"><svg class="ic19"><use href="#xml"/></svg><span>fragment3_fragment.xml</span><em>&#10005;</em></div>
</div>
<div class="design">
<div class="left-col">
<div class="palette">
<div class="ph"><span class="ph-title">Palette</span><svg class="ic18"><use href="#search"/></svg><svg class="ic18"><use href="#gear"/></svg><svg class="ic18"><use href="#minus"/></svg></div>
<div class="pbody">
<div class="pcats"><span>Common</span><span>Text</span><span>Buttons</span><span>Widgets</span><span>Layouts</span><span class="on">Containers</span><span>Google</span><span>Legacy</span></div>
<div class="pitems">
<div class="pi"><svg class="ic17"><use href="#spin"/></svg><span>Spinner</span></div>
<div class="pi"><svg class="ic17"><use href="#recy"/></svg><span>RecyclerView</span></div>
<div class="pi on"><svg class="ic17"><use href="#scroll"/></svg><span>ScrollView</span></div>
<div class="pi"><svg class="ic17"><use href="#hscr"/></svg><span>HorizontalScrollV...</span></div>
<div class="pi nest"><svg class="ic17"><use href="#scroll"/></svg><span>NestedScrollView</span><svg class="dl"><use href="#dl"/></svg></div>
<div class="pi"><svg class="ic17"><use href="#vpag"/></svg><span>ViewPager</span><svg class="dl"><use href="#dl"/></svg></div>
<div class="pi"><svg class="ic17"><use href="#card"/></svg><span>CardView</span></div>
<div class="pi"><svg class="ic17"><use href="#abar"/></svg><span>AppBarLayout</span></div>
<div class="pi"><svg class="ic17"><use href="#navv"/></svg><span>NavigationView</span></div>
<div class="pi"><svg class="ic17"><use href="#bnav"/></svg><span>BottomNavigatio...</span></div>
<div class="pi"><svg class="ic17"><use href="#tbar"/></svg><span>Toolbar</span></div>
<div class="pi"><svg class="ic17"><use href="#tlay"/></svg><span>TabLayout</span></div>
<div class="pi noicon"><span>TabItem</span></div>
<div class="pi"><svg class="ic17"><use href="#stub"/></svg><span>ViewStub</span></div>
<div class="pi"><svg class="ic17"><use href="#incl"/></svg><span>&lt;include&gt;</span></div>
</div>
<div class="pscroll"><i></i></div>
</div>
</div>
<div class="split"></div>
<div class="ctree">
<div class="ph ch"><span class="ph-title">Component Tree</span><svg class="ic18"><use href="#gear"/></svg><svg class="ic18"><use href="#minus"/></svg></div>
<div class="crow c0"><svg class="ic18"><use href="#lin"/></svg><span>LinearLayout<small>(vertical)</small></span></div>
<div class="crow c1"><svg class="arrow"><use href="#ad"/></svg><svg class="ic18"><use href="#scroll"/></svg><span>ScrollView</span><svg class="ic16 warn"><use href="#warn"/></svg></div>
<div class="crow c2"><svg class="arrow"><use href="#ad"/></svg><svg class="ic18"><use href="#lin"/></svg><span>LinearLayout<small>(vertical)</small></span></div>
<div class="crow c3"><svg class="ic18"><use href="#code"/></svg><span>fragment<small>- com.examp...</small></span></div>
<div class="crow c3"><svg class="ic18"><use href="#code"/></svg><span>fragment3<small>- com.exam...</small></span></div>
</div>
</div>
<div class="surface">
<div class="dbar d1"><svg class="ic22"><use href="#layers"/></svg><svg class="ic12"><use href="#caret"/></svg><i class="dsep"></i><svg class="ic22"><use href="#rot"/></svg><svg class="ic12"><use href="#caret"/></svg><i class="dsep"></i><svg class="ic18"><use href="#phonei"/></svg><span class="dlabel">Pixel</span><div class="dright"><svg class="ic18"><use href="#gear"/></svg><svg class="ic18"><use href="#minus"/></svg></div></div>
<div class="dbar d2"><svg class="ic18"><use href="#eye"/></svg><svg class="ic18"><use href="#cols"/></svg><i class="dsep"></i><svg class="ic18"><use href="#hh"/></svg><svg class="ic18"><use href="#vv"/></svg></div>
<div class="canvas">
<div class="screen-a"><div class="teal"></div><div class="frag"><span>&lt;fragment&gt;</span><span>&lt;fragment&gt;</span></div><div class="grad"></div><div class="fab-s"><svg class="mail-s"><use href="#mail"/></svg></div></div>
<div class="screen-b"></div>
<p class="hint">Select a component in the Component<br>Tree or on the Design Surface.</p>
</div>
</div>
</div>
<div class="dtabs"><span class="on">Design</span><span>Text</span></div>
</section>
<aside class="stripe-right"><div class="ritem"><svg class="ic16"><use href="#gele"/></svg><span class="vtext-r">Gradle</span></div><div class="ritem"><svg class="ic16"><use href="#devex"/></svg><span class="vtext-r">Device File Explorer</span></div></aside>
</div>
<div class="toolwins"><span class="tw tw1"><svg class="ic16"><use href="#run4"/></svg><span><u>4</u>: Run</span></span><span class="tw tw2"><svg class="ic14"><use href="#logcat"/></svg><span><u>6</u>: Logcat</span></span><span class="tw tw3"><svg class="ic14"><use href="#todo"/></svg><span>TODO</span></span><span class="tw tw4"><svg class="ic14"><use href="#term"/></svg><span>Terminal</span></span><span class="tw tw5"><svg class="ic16"><use href="#hammer2"/></svg><span>Build</span></span><span class="tw tw6"><svg class="ic16"><use href="#gauge2"/></svg><span>Profiler</span></span><span class="evlog"><i class="badge">1</i><span>Event Log</span></span></div>
<footer class="status"><svg class="ic18"><use href="#frame"/></svg><span class="st-text">Gradle build finished in 11 s 524 ms (moments ago)</span><div class="st-right"><svg class="ic16"><use href="#lock"/></svg><svg class="ic18"><use href="#hector"/></svg></div></footer>
<div class="taskbar">
<span class="tk"><svg class="ic20"><use href="#win"/></svg></span><span class="tk"><svg class="ic20"><use href="#tview"/></svg></span><span class="tk"><svg class="ic28"><use href="#pc"/></svg></span><span class="tk run"><svg class="ic28"><use href="#chrome"/></svg></span><span class="tk"><svg class="ic30"><use href="#pencil"/></svg></span><span class="tk"><svg class="ic30"><use href="#outl"/></svg></span><span class="tk act"><svg class="ic34"><use href="#astudio"/></svg></span><span class="tk"><svg class="ic30"><use href="#wa"/></svg></span><span class="tk"><svg class="ic30"><use href="#ghub"/></svg></span><span class="tk"><span class="nflx">N</span></span><span class="tk run"><svg class="ic30"><use href="#expl"/></svg></span><span class="tk run"><svg class="ic30"><use href="#word"/></svg></span><span class="tk run"><svg class="ic30"><use href="#slack"/></svg></span><span class="tk cur"><svg class="ic30"><use href="#door"/></svg></span>
<div class="tray"><span class="ts"><svg class="ic16"><use href="#tslack"/></svg></span><span class="ts"><svg class="ic20"><use href="#cloud"/></svg></span><span class="ts"><svg class="ic20"><use href="#alist"/></svg></span><span class="ts"><svg class="ic20"><use href="#tbolt"/></svg></span><span class="ts"><svg class="ic22"><use href="#bt"/></svg></span><span class="ts"><svg class="ic18"><use href="#batt"/></svg></span><span class="ts"><svg class="ic18"><use href="#wifi"/></svg></span><span class="ts"><svg class="ic20"><use href="#vol"/></svg></span><span class="ts ts-pen"><svg class="ic22"><use href="#pen"/></svg></span><span class="ts ts-kbd"><svg class="ic30"><use href="#kbd"/></svg></span><span class="clock"><span>5:00 PM</span><span>6/16/2019</span></span><span class="ts ts-n"><svg class="ic20"><use href="#notif"/></svg></span></div>
</div>
<div class="phone">
<i class="pbtn pb1"></i><i class="pbtn pb2"></i>
<div class="bezel">
<div class="bz-left"><div class="notch"><i class="camera c-a"></i><i class="speaker"></i><i class="camera c-b"></i></div></div>
<div class="scr">
<div class="sb"><span class="sb-time">5:00</span><svg class="ic14"><use href="#sbgear"/></svg><span class="sb-a">A</span><div class="sb-right"><svg class="sbw"><use href="#sbwifi"/></svg><svg class="sbs"><use href="#sbsig"/></svg><svg class="sbb"><use href="#sbbat"/></svg></div></div>
<div class="ab"><span>MenuProject</span><svg class="dots"><use href="#dots"/></svg></div>
<div class="content pos-a"><div class="btn lt">SMS</div><div class="btn dk">PHONE</div><div class="btn lt">WEB</div><div class="btn dk">MAP</div><div class="btn lt">SHARE</div></div>
<div class="fab"><svg class="mail"><use href="#mail"/></svg></div>
</div>
<div class="bz-nav"><i class="nav-sq"></i><i class="nav-ci"></i><i class="nav-tr"></i></div>
<div class="bz-right"><i class="rspeaker"></i></div>
</div>
</div>
<div class="emu">
<div class="emu-top"><span class="emu-min"></span><span class="emu-x">&#10005;</span></div>
<span class="eb"><svg class="ic22"><use href="#power"/></svg></span><span class="eb"><svg class="ic22"><use href="#volu"/></svg></span><span class="eb"><svg class="ic22"><use href="#vold"/></svg></span><span class="eb"><svg class="ic24"><use href="#rotl"/></svg></span><span class="eb"><svg class="ic24"><use href="#rotr"/></svg></span><span class="eb"><svg class="ic20"><use href="#cam"/></svg></span><span class="eb"><svg class="ic20"><use href="#zoom"/></svg></span><span class="eb"><svg class="ic20"><use href="#back"/></svg></span><span class="eb"><svg class="ic20"><use href="#home"/></svg></span><span class="eb"><svg class="ic20"><use href="#recent"/></svg></span><span class="eb"><svg class="ic20"><use href="#more"/></svg></span>
</div>
</section>

<section class="window">
<header class="titlebar"><svg class="ic16"><use href="#as"/></svg><span class="title-text">MenuProject [C:\Users\adity\AndroidStudioProjects\MenuProject] - ...\app\src\main\res\layout\content_main.xml [app] - Android Studio</span><div class="winctl"><span class="wc-min"></span><span class="wc-max"></span><svg class="ic14"><use href="#wx"/></svg></div></header>
<nav class="menubar"><span><u>F</u>ile</span><span><u>E</u>dit</span><span><u>V</u>iew</span><span><u>N</u>avigate</span><span><u>C</u>ode</span><span>Analy<u>z</u>e</span><span><u>R</u>efactor</span><span><u>B</u>uild</span><span>R<u>u</u>n</span><span><u>T</u>ools</span><span>VC<u>S</u></span><span><u>W</u>indow</span><span><u>H</u>elp</span></nav>
<div class="navbar">
<div class="crumbs"><svg class="ic19"><use href="#fproj"/></svg><b>MenuProject</b><i class="chev"></i><svg class="ic18"><use href="#fapp"/></svg><b>app</b><i class="chev"></i><svg class="ic18"><use href="#fgray"/></svg><span>src</span><i class="chev"></i><svg class="ic18"><use href="#fgray"/></svg><span>main</span><i class="chev"></i><svg class="ic18"><use href="#fres"/></svg><span>res</span><i class="chev"></i><svg class="ic18"><use href="#fdot"/></svg><span>layout</span><i class="chev"></i><svg class="ic19"><use href="#xml"/></svg><span>content_main.xml</span></div>
<div class="tools"><span class="slot"><svg class="ic18"><use href="#runwin"/></svg></span><span class="slot"><svg class="ic18"><use href="#hammer"/></svg></span><span class="appbox"><svg class="ic16"><use href="#droid"/></svg><span>app</span><svg class="ic12"><use href="#caret"/></svg></span><span class="slot"><svg class="ic18"><use href="#run"/></svg></span><span class="slot"><svg class="ic18"><use href="#bolt"/></svg></span><span class="slot"><svg class="ic18"><use href="#bug"/></svg></span><span class="slot"><svg class="ic18"><use href="#cover"/></svg></span><span class="slot"><svg class="ic18"><use href="#gauge"/></svg></span><span class="slot"><svg class="ic18"><use href="#attach"/></svg></span><span class="slot"><svg class="ic18"><use href="#stop"/></svg></span><i class="tsep"></i><span class="slot"><svg class="ic18"><use href="#gsync"/></svg></span><span class="slot"><svg class="ic18"><use href="#avd"/></svg></span><span class="slot"><svg class="ic18"><use href="#sdk"/></svg></span><i class="tsep"></i><span class="slot"><svg class="ic18"><use href="#search"/></svg></span><span class="slot"><svg class="ic18"><use href="#pstruct"/></svg></span><span class="slot"><svg class="ic20"><use href="#user"/></svg></span></div>
</div>
<div class="workspace">
<aside class="stripe-left">
<div class="sitem active"><span class="vtext"><u>1</u>: Project</span><svg class="ic18"><use href="#as"/></svg></div>
<div class="sitem"><span class="vtext">Resource Manager</span><svg class="ic16"><use href="#resm"/></svg></div>
<div class="sitem"><span class="vtext">Layout Captures</span><svg class="ic16"><use href="#capt"/></svg></div>
<div class="sitem"><span class="vtext"><u>7</u>: Structure</span><svg class="ic16"><use href="#struct"/></svg></div>
<div class="sitem"><span class="vtext"><u>2</u>: Favorites</span><svg class="ic16"><use href="#star"/></svg></div>
<div class="sitem"><span class="vtext">Build Variants</span><svg class="ic16"><use href="#droidg"/></svg></div>
</aside>
<section class="project">
<div class="proj-head"><svg class="ic16 a-icon"><use href="#droid"/></svg><span class="proj-name">Android</span><svg class="ic12"><use href="#caret"/></svg><div class="proj-tools"><svg class="ic18"><use href="#target"/></svg><svg class="ic18"><use href="#collapse"/></svg><i class="hsep"></i><svg class="ic18"><use href="#gear"/></svg><svg class="ic18"><use href="#minus"/></svg></div></div>
<div class="tree">
<div class="row l0"><svg class="arrow"><use href="#ad"/></svg><svg class="ic18"><use href="#fapp"/></svg><b>app</b></div>
<div class="row l1"><svg class="arrow"><use href="#ar"/></svg><svg class="ic18"><use href="#fblue"/></svg><span>manifests</span></div>
<div class="row l1"><svg class="arrow"><use href="#ar"/></svg><svg class="ic18"><use href="#fblue"/></svg><span>java</span></div>
<div class="row l1"><svg class="arrow"><use href="#ar"/></svg><svg class="ic18"><use href="#fgen"/></svg><span>generatedJava</span></div>
<div class="row l1"><svg class="arrow"><use href="#ad"/></svg><svg class="ic18"><use href="#fres"/></svg><span>res</span></div>
<div class="row l2"><svg class="arrow"><use href="#ar"/></svg><svg class="ic18"><use href="#fdot"/></svg><span>drawable</span></div>
<div class="row l2"><svg class="arrow"><use href="#ar"/></svg><svg class="ic18"><use href="#fdot"/></svg><span>font</span></div>
<div class="row l2"><svg class="arrow"><use href="#ad"/></svg><svg class="ic18"><use href="#fdot"/></svg><span>layout</span></div>
<div class="row l3"><svg class="ic19"><use href="#xml"/></svg><span>activity_help.xml</span></div>
<div class="row l3"><svg class="ic19"><use href="#xml"/></svg><span>activity_main.xml</span></div>
<div class="row l3"><svg class="ic19"><use href="#xml"/></svg><span>activity_new.xml</span></div>
<div class="row l3"><svg class="ic19"><use href="#xml"/></svg><span>content_help.xml</span></div>
<div class="row l3 sel"><svg class="ic19"><use href="#xml"/></svg><span>content_main.xml</span></div>
<div class="row l3"><svg class="ic19"><use href="#xml"/></svg><span>content_new.xml</span></div>
<div class="row l3"><svg class="ic19"><use href="#xml"/></svg><span>fragment1_activity.xml</span></div>
<div class="row l3"><svg class="ic19"><use href="#xml"/></svg><span>fragment1_fragment.xml</span></div>
<div class="row l3"><svg class="ic19"><use href="#xml"/></svg><span>fragment2_activity.xml</span></div>
<div class="row l3"><svg class="ic19"><use href="#xml"/></svg><span>fragment2_fragment.xml</span></div>
<div class="row l3"><svg class="ic19"><use href="#xml"/></svg><span>fragment3_activity.xml</span></div>
<div class="row l3"><svg class="ic19"><use href="#xml"/></svg><span>fragment3_fragment.xml</span></div>
<div class="row l2"><svg class="arrow"><use href="#ar"/></svg><svg class="ic18"><use href="#fdot"/></svg><span>menu</span></div>
<div class="row l2"><svg class="arrow"><use href="#ar"/></svg><svg class="ic18"><use href="#fdot"/></svg><span>mipmap</span></div>
<div class="row l2"><svg class="arrow"><use href="#ar"/></svg><svg class="ic18"><use href="#fdot"/></svg><span>values</span></div>
<div class="row l0"><svg class="arrow"><use href="#ar"/></svg><svg class="ic18"><use href="#gele"/></svg><span>Gradle Scripts</span></div>
</div>
</section>
<section class="editor">
<div class="tabs">
<div class="tab"><svg class="ic19"><use href="#xml"/></svg><span>fragment1_fragment.xml</span><em>&#10005;</em></div>
<div class="tab on"><svg class="ic19"><use href="#xml"/></svg><span>content_main.xml</span><em>&#10005;</em></div>
<div class="tab"><svg class="ic19"><use href="#xml"/></svg><span>fragment2_fragment.xml</span><em>&#10005;</em></div>
<div class="tab"><svg class="ic19"><use href="#xml"/></svg><span>fragment3_fragment.xml</span><em>&#10005;</em></div>
</div>
<div class="design">
<div class="left-col">
<div class="palette">
<div class="ph"><span class="ph-title">Palette</span><svg class="ic18"><use href="#search"/></svg><svg class="ic18"><use href="#gear"/></svg><svg class="ic18"><use href="#minus"/></svg></div>
<div class="pbody">
<div class="pcats"><span>Common</span><span>Text</span><span>Buttons</span><span>Widgets</span><span>Layouts</span><span class="on">Containers</span><span>Google</span><span>Legacy</span></div>
<div class="pitems">
<div class="pi"><svg class="ic17"><use href="#spin"/></svg><span>Spinner</span></div>
<div class="pi"><svg class="ic17"><use href="#recy"/></svg><span>RecyclerView</span></div>
<div class="pi on"><svg class="ic17"><use href="#scroll"/></svg><span>ScrollView</span></div>
<div class="pi"><svg class="ic17"><use href="#hscr"/></svg><span>HorizontalScrollV...</span></div>
<div class="pi nest"><svg class="ic17"><use href="#scroll"/></svg><span>NestedScrollView</span><svg class="dl"><use href="#dl"/></svg></div>
<div class="pi"><svg class="ic17"><use href="#vpag"/></svg><span>ViewPager</span><svg class="dl"><use href="#dl"/></svg></div>
<div class="pi"><svg class="ic17"><use href="#card"/></svg><span>CardView</span></div>
<div class="pi"><svg class="ic17"><use href="#abar"/></svg><span>AppBarLayout</span></div>
<div class="pi"><svg class="ic17"><use href="#navv"/></svg><span>NavigationView</span></div>
<div class="pi"><svg class="ic17"><use href="#bnav"/></svg><span>BottomNavigatio...</span></div>
<div class="pi"><svg class="ic17"><use href="#tbar"/></svg><span>Toolbar</span></div>
<div class="pi"><svg class="ic17"><use href="#tlay"/></svg><span>TabLayout</span></div>
<div class="pi noicon"><span>TabItem</span></div>
<div class="pi"><svg class="ic17"><use href="#stub"/></svg><span>ViewStub</span></div>
<div class="pi"><svg class="ic17"><use href="#incl"/></svg><span>&lt;include&gt;</span></div>
</div>
<div class="pscroll"><i></i></div>
</div>
</div>
<div class="split"></div>
<div class="ctree">
<div class="ph ch"><span class="ph-title">Component Tree</span><svg class="ic18"><use href="#gear"/></svg><svg class="ic18"><use href="#minus"/></svg></div>
<div class="crow c0"><svg class="ic18"><use href="#lin"/></svg><span>LinearLayout<small>(vertical)</small></span></div>
<div class="crow c1"><svg class="arrow"><use href="#ad"/></svg><svg class="ic18"><use href="#scroll"/></svg><span>ScrollView</span><svg class="ic16 warn"><use href="#warn"/></svg></div>
<div class="crow c2"><svg class="arrow"><use href="#ad"/></svg><svg class="ic18"><use href="#lin"/></svg><span>LinearLayout<small>(vertical)</small></span></div>
<div class="crow c3"><svg class="ic18"><use href="#code"/></svg><span>fragment<small>- com.examp...</small></span></div>
<div class="crow c3"><svg class="ic18"><use href="#code"/></svg><span>fragment3<small>- com.exam...</small></span></div>
</div>
</div>
<div class="surface">
<div class="dbar d1"><svg class="ic22"><use href="#layers"/></svg><svg class="ic12"><use href="#caret"/></svg><i class="dsep"></i><svg class="ic22"><use href="#rot"/></svg><svg class="ic12"><use href="#caret"/></svg><i class="dsep"></i><svg class="ic18"><use href="#phonei"/></svg><span class="dlabel">Pixel</span><div class="dright"><svg class="ic18"><use href="#gear"/></svg><svg class="ic18"><use href="#minus"/></svg></div></div>
<div class="dbar d2"><svg class="ic18"><use href="#eye"/></svg><svg class="ic18"><use href="#cols"/></svg><i class="dsep"></i><svg class="ic18"><use href="#hh"/></svg><svg class="ic18"><use href="#vv"/></svg></div>
<div class="canvas">
<div class="screen-a"><div class="teal"></div><div class="frag"><span>&lt;fragment&gt;</span><span>&lt;fragment&gt;</span></div><div class="grad"></div><div class="fab-s"><svg class="mail-s"><use href="#mail"/></svg></div></div>
<div class="screen-b"></div>
<p class="hint">Select a component in the Component<br>Tree or on the Design Surface.</p>
</div>
</div>
</div>
<div class="dtabs"><span class="on">Design</span><span>Text</span></div>
</section>
<aside class="stripe-right"><div class="ritem"><svg class="ic16"><use href="#gele"/></svg><span class="vtext-r">Gradle</span></div><div class="ritem"><svg class="ic16"><use href="#devex"/></svg><span class="vtext-r">Device File Explorer</span></div></aside>
</div>
<div class="toolwins"><span class="tw tw1"><svg class="ic16"><use href="#run4"/></svg><span><u>4</u>: Run</span></span><span class="tw tw2"><svg class="ic14"><use href="#logcat"/></svg><span><u>6</u>: Logcat</span></span><span class="tw tw3"><svg class="ic14"><use href="#todo"/></svg><span>TODO</span></span><span class="tw tw4"><svg class="ic14"><use href="#term"/></svg><span>Terminal</span></span><span class="tw tw5"><svg class="ic16"><use href="#hammer2"/></svg><span>Build</span></span><span class="tw tw6"><svg class="ic16"><use href="#gauge2"/></svg><span>Profiler</span></span><span class="evlog"><i class="badge">1</i><span>Event Log</span></span></div>
<footer class="status"><svg class="ic18"><use href="#frame"/></svg><span class="st-text">Gradle build finished in 11 s 524 ms (moments ago)</span><div class="st-right"><svg class="ic16"><use href="#lock"/></svg><svg class="ic18"><use href="#hector"/></svg></div></footer>
<div class="taskbar">
<span class="tk"><svg class="ic20"><use href="#win"/></svg></span><span class="tk"><svg class="ic20"><use href="#tview"/></svg></span><span class="tk"><svg class="ic28"><use href="#pc"/></svg></span><span class="tk run"><svg class="ic28"><use href="#chrome"/></svg></span><span class="tk"><svg class="ic30"><use href="#pencil"/></svg></span><span class="tk"><svg class="ic30"><use href="#outl"/></svg></span><span class="tk act"><svg class="ic34"><use href="#astudio"/></svg></span><span class="tk"><svg class="ic30"><use href="#wa"/></svg></span><span class="tk"><svg class="ic30"><use href="#ghub"/></svg></span><span class="tk"><span class="nflx">N</span></span><span class="tk run"><svg class="ic30"><use href="#expl"/></svg></span><span class="tk run"><svg class="ic30"><use href="#word"/></svg></span><span class="tk run"><svg class="ic30"><use href="#slack"/></svg></span><span class="tk cur"><svg class="ic30"><use href="#door"/></svg></span>
<div class="tray"><span class="ts"><svg class="ic16"><use href="#tslack"/></svg></span><span class="ts"><svg class="ic20"><use href="#cloud"/></svg></span><span class="ts"><svg class="ic20"><use href="#alist"/></svg></span><span class="ts"><svg class="ic20"><use href="#tbolt"/></svg></span><span class="ts"><svg class="ic22"><use href="#bt"/></svg></span><span class="ts"><svg class="ic18"><use href="#batt"/></svg></span><span class="ts"><svg class="ic18"><use href="#wifi"/></svg></span><span class="ts"><svg class="ic20"><use href="#vol"/></svg></span><span class="ts ts-pen"><svg class="ic22"><use href="#pen"/></svg></span><span class="ts ts-kbd"><svg class="ic30"><use href="#kbd"/></svg></span><span class="clock"><span>5:00 PM</span><span>6/16/2019</span></span><span class="ts ts-n"><svg class="ic20"><use href="#notif"/></svg></span></div>
</div>
<div class="phone">
<i class="pbtn pb1"></i><i class="pbtn pb2"></i>
<div class="bezel">
<div class="bz-left"><div class="notch"><i class="camera c-a"></i><i class="speaker"></i><i class="camera c-b"></i></div></div>
<div class="scr">
<div class="sb"><span class="sb-time">5:00</span><svg class="ic14"><use href="#sbgear"/></svg><span class="sb-a">A</span><div class="sb-right"><svg class="sbw"><use href="#sbwifi"/></svg><svg class="sbs"><use href="#sbsig"/></svg><svg class="sbb"><use href="#sbbat"/></svg></div></div>
<div class="ab"><span>MenuProject</span><svg class="dots"><use href="#dots"/></svg></div>
<div class="content pos-b"><div class="btn dk">PHONE</div><div class="btn lt">WEB</div><div class="btn dk">MAP</div><div class="btn lt">SHARE</div><div class="btn dk wide">NEW ACTIVITY</div></div>
<div class="fab"><svg class="mail"><use href="#mail"/></svg></div>
</div>
<div class="bz-nav"><i class="nav-sq"></i><i class="nav-ci"></i><i class="nav-tr"></i></div>
<div class="bz-right"><i class="rspeaker"></i></div>
</div>
</div>
<div class="emu">
<div class="emu-top"><span class="emu-min"></span><span class="emu-x">&#10005;</span></div>
<span class="eb"><svg class="ic22"><use href="#power"/></svg></span><span class="eb"><svg class="ic22"><use href="#volu"/></svg></span><span class="eb"><svg class="ic22"><use href="#vold"/></svg></span><span class="eb"><svg class="ic24"><use href="#rotl"/></svg></span><span class="eb"><svg class="ic24"><use href="#rotr"/></svg></span><span class="eb"><svg class="ic20"><use href="#cam"/></svg></span><span class="eb"><svg class="ic20"><use href="#zoom"/></svg></span><span class="eb"><svg class="ic20"><use href="#back"/></svg></span><span class="eb"><svg class="ic20"><use href="#home"/></svg></span><span class="eb"><svg class="ic20"><use href="#recent"/></svg></span><span class="eb"><svg class="ic20"><use href="#more"/></svg></span>
</div>
</section>
</body>
</html>
```
FILE: styles.css
```css
*{box-sizing:border-box}
html,body{margin:0;padding:0;background:#3c3f41}
body{width:1920px;height:2160px;overflow:hidden;font-family:"Open Sans","Noto Sans",sans-serif;color:#b4b4b4;font-size:14.2px}
.sprite{position:absolute;width:0;height:0;overflow:hidden}
svg{display:block;flex:none}
b{font-weight:700}
i,em{font-style:normal}
.ic12{width:12px;height:12px}.ic14{width:14px;height:14px}.ic16{width:16px;height:16px}.ic17{width:17px;height:17px}.ic18{width:18px;height:18px}.ic19{width:19px;height:19px}.ic20{width:20px;height:20px}.ic22{width:22px;height:22px}.ic24{width:24px;height:24px}.ic28{width:28px;height:28px}.ic30{width:30px;height:30px}.ic34{width:34px;height:34px}
.window{position:relative;width:1920px;height:1080px;display:flex;flex-direction:column;overflow:hidden;background:#3c3f41}

.titlebar{height:29px;flex:none;background:#fff;display:flex;align-items:center;padding-left:4px;color:#8b8b8b}
.title-text{margin-left:7px;font-size:14.28px;white-space:nowrap}
.winctl{margin-left:auto;display:flex;align-items:center;padding-right:25px}
.wc-min{width:14px;height:1px;background:#888;margin-right:45px}
.wc-max{width:11px;height:13px;border:1px solid #888;margin-right:47px;box-shadow:2px -2px 0 -1px #fff,2px -2px 0 0 #888}

.menubar{height:27px;flex:none;display:flex;align-items:center;gap:15.7px;padding-left:8px;font-size:14.5px;color:#b9b9b9;border-bottom:1px solid #515354;white-space:nowrap}
.navbar{height:36px;flex:none;display:flex;align-items:center;border-bottom:1px solid #2f3234}
.crumbs{display:flex;align-items:center;padding-left:11px;white-space:nowrap;font-size:14px}
.crumbs svg{margin-right:5px}
.crumbs b{color:#b9b9b9}
.chev{width:14px;height:14px;border-top:1px solid #666;border-right:1px solid #666;transform:scaleX(.55) rotate(45deg);margin:0 1px 0 1px}
.tools{margin-left:auto;display:flex;align-items:center;padding-right:3px}
.slot{width:32px;display:flex;justify-content:center}
.appbox{width:91px;height:27px;margin:0 7px 0 9px;border:1px solid #5a5d5f;border-radius:4px;display:flex;align-items:center;padding-left:10px;gap:6px;font-size:14px}
.appbox .ic12{margin-left:5px}
.tsep{width:1px;height:24px;background:#515354;margin:0 4px 0 6px}

.workspace{flex:1;display:flex;min-height:0}
.stripe-left{width:29px;flex:none;display:grid;grid-template-rows:104px 156px 238px 124px 118px 133px;border-right:1px solid #323537;font-size:12.6px}
.sitem{display:flex;flex-direction:column;align-items:center;justify-content:flex-end;gap:6px;padding-bottom:4px}
.sitem.active{background:#2d2f30;padding-bottom:12px;gap:5px}
.vtext{writing-mode:vertical-rl;transform:rotate(180deg);white-space:nowrap}
.stripe-right{width:29px;flex:none;display:flex;flex-direction:column;justify-content:space-between;align-items:center;border-left:1px solid #323537;padding:12px 0 17px;font-size:12.5px}
.ritem{display:flex;flex-direction:column;align-items:center;gap:4px}
.vtext-r{writing-mode:vertical-rl;white-space:nowrap;color:#a8a8a8}

.project{width:446px;flex:none;display:flex;flex-direction:column;background:#3c3f41}
.proj-head{height:32px;flex:none;display:flex;align-items:center;padding-left:13px;border-bottom:1px solid #323537}
.proj-name{margin:0 12px 0 7px}
.proj-tools{margin-left:auto;display:flex;align-items:center;gap:15px;padding-right:8px}
.hsep{width:1px;height:24px;background:#515354;margin:0 -3px 0 -4px}
.row{height:25px;display:flex;align-items:center;white-space:nowrap;padding-top:1px}
.arrow{width:12px;height:12px;margin-right:11px}
.row .ic18{margin-right:5px}
.row .ic19{margin-right:4px}
.l0{padding-left:3px}.l1{padding-left:25px}.l2{padding-left:47px}.l3{padding-left:93px}
.sel{background:#0d293e;color:#c8c8c8}

.editor{flex:1;min-width:0;display:flex;flex-direction:column;background:#313335}
.tabs{height:31px;flex:none;display:flex;padding-left:2px;background:#3c3f41;border-bottom:1px solid #323537}
.tab{height:30px;display:flex;align-items:center;padding:2px 8px 0 11px;white-space:nowrap;box-shadow:inset -1px 0 0 #323537}
.tab .ic19{margin-right:4px}
.tab em{font-size:12px;margin-left:8px;color:#6e7174;width:10px;font-family:"DejaVu Sans",sans-serif}
.tab.on{background:#4e5254;border-bottom:3px solid #4a88a8;color:#bbb;padding-top:5px}
.design{flex:1;display:flex;min-height:0}
.left-col{width:282px;flex:none;display:flex;flex-direction:column;border-left:2px solid #2f3234;border-right:1px solid #2a2c2e;background:#313335}
.palette{height:405px;flex:none;display:flex;flex-direction:column;overflow:hidden}
.ph{height:35px;flex:none;display:flex;align-items:center;padding:3px 7px 0 6px;gap:15px;font-size:12px;letter-spacing:.9px;border-bottom:1px solid #2a2c2e;background:#313335}
.ph-title{margin-right:auto}
.pbody{flex:1;display:flex;min-height:0}
.pcats{width:92px;flex:none;display:flex;flex-direction:column;padding-top:2px;background:#34373a;font-size:12px;letter-spacing:.8px}
.pcats span{height:30px;display:flex;align-items:center;padding-left:13px}
.pcats .on{background:#0d293e}
.pitems{width:176px;flex:none;background:#313335;overflow:hidden;font-size:14px;padding-top:1px}
.pi{height:25px;display:flex;align-items:center;padding-left:15px;white-space:nowrap}
.pi .ic17{margin-right:5px}
.pi span{overflow:hidden;max-width:128px}
.pi.nest span{max-width:109px}
.pi.on{background:#0d293e}
.pi.noicon{padding-left:13px}
.noicon::before{content:"";width:2px;height:2px;background:#b5b5b5;margin-right:4px}
.dl{width:14px;height:14px;position:absolute;margin-left:133px}
.pscroll{flex:1;background:#313335}
.pscroll i{display:block;height:282px;background:#4a4d4f}
.split{height:8px;flex:none;background:#45484a}
.ctree{flex:1;background:#313335;font-size:14px}
.ch{height:38px;padding-top:5px}
.crow{height:25px;display:flex;align-items:center;white-space:nowrap;position:relative}
.crow small{font-size:inherit;color:#808386}
.crow .ic18{margin-right:6px}
.c0{padding-left:8px}
.c1{padding-left:11px}
.c1 .arrow,.c2 .arrow{margin-right:9px}
.c1 .ic18,.c2 .ic18{margin-right:4px}
.c2{padding-left:34px}
.c3{padding-left:76px}
.warn{position:absolute;left:254px}
.surface{flex:1;min-width:0;display:flex;flex-direction:column;background:#313335;position:relative}
.dbar{height:36px;flex:none;display:flex;align-items:center;border-bottom:1px solid #2a2c2e}
.d1{padding-left:10px}
.d1 .ic12{margin-left:1px}
.dsep{width:1px;height:24px;background:#515354;margin:0 11px}
.d1 .ic18{margin-left:1px}
.dlabel{margin-left:9px;font-size:13.5px}
.dright{margin-left:auto;display:flex;gap:14px;padding-right:7px;align-items:center}
.d2{padding-left:12px;gap:20px}
.d2 .dsep{margin:0 -8px 0 -9px}
.d2 svg:last-child{margin-left:-6px}
.canvas{flex:1;position:relative;overflow:hidden}
.screen-a{position:absolute;left:88px;top:102px;width:306px;height:544px;display:flex;flex-direction:column}
.teal{height:41px;flex:none;background:#008577}
.frag{height:29px;flex:none;display:flex;flex-direction:column;background:#a8a8a8;color:#222;font-size:10.3px;line-height:14.5px;font-family:Roboto,sans-serif}
.grad{flex:1;background:linear-gradient(#3f7595,#8eacc5)}
.fab-s{position:absolute;left:252px;top:491px;width:42px;height:42px;border-radius:50%;background:#d81b60;display:flex;align-items:center;justify-content:center;box-shadow:0 3px 5px rgba(0,0,0,.3)}
.mail-s{width:19px;height:14px}
.screen-b{position:absolute;left:406px;top:102px;width:308px;height:544px;background:#2b5e8c;border:1px dashed #8fb8dd}
.hint{position:absolute;right:31px;top:325px;margin:0;text-align:center;white-space:nowrap;line-height:20px;color:#7c7f81;font-size:14.2px}
.dtabs{height:31px;flex:none;display:flex;align-items:flex-end;padding-left:14px;background:#3c3f41;border-top:6px solid #4a4d4f;font-size:14px}
.dtabs span{height:25px;display:flex;align-items:center;padding:0 11px 3px;width:68px;justify-content:center;border-right:1px solid #323537}
.dtabs .on{background:#4e5254}
.dtabs span:last-child{width:63px}

.toolwins{height:29px;flex:none;position:relative;border-top:1px solid #515354;border-bottom:1px solid #515354;font-size:12.5px;letter-spacing:.3px}
.tw{position:absolute;top:2px;height:27px;display:flex;align-items:center;gap:6px;white-space:nowrap}
.tw1{left:41px;gap:4px}.tw2{left:126px}.tw3{left:230px}.tw4{left:313px}.tw5{left:409px}.tw6{left:486px}
.evlog{position:absolute;left:1796px;top:1px;height:27px;display:flex;align-items:center;gap:6px}
.badge{width:16px;height:16px;border-radius:50%;background:#499c54;color:#fff;font-size:10px;font-weight:700;text-align:center;line-height:16px}
.status{height:27px;flex:none;display:flex;align-items:center;padding:2px 0 0 11px;font-size:14px}
.st-text{margin-left:10px;white-space:nowrap}
.st-right{margin-left:auto;display:flex;align-items:center;gap:15px;padding-right:8px}

.taskbar{height:50px;flex:none;display:flex;align-items:center;background:linear-gradient(90deg,#0c1626,#101a2a 30%,#2a2c2f 40%,#26282b 46%,#0e1724 56%,#0c1626)}
.tk{width:62px;height:50px;flex:none;display:flex;align-items:center;justify-content:center;position:relative}
.tk:first-child{margin-left:-1px}
.tk.run::after,.tk.cur::after{content:"";position:absolute;left:5px;right:5px;bottom:0;height:3px;background:#76b9ed}
.tk.cur::after{left:0;right:0}
.tk.act{background:#9c5a22;border-bottom:3px solid #f27a14}
.tk.cur{background:#4f5052}
.nflx{width:30px;height:30px;background:#000;color:#d81f26;font:700 25px/30px "Liberation Sans",sans-serif;text-align:center}
.tray{margin-left:auto;display:flex;align-items:center;padding-right:20px;color:#fff;border-right:1px solid #333;height:50px}
.ts{width:40px;display:flex;justify-content:center}
.ts-pen{width:50px}.ts-kbd{width:48px}.ts-n{width:44px}
.clock{width:88px;display:flex;flex-direction:column;align-items:center;font-size:14px;line-height:23px;color:#eee}

.phone{position:absolute;left:901px;top:130px;width:860px;height:415px;border-radius:46px;background:#1c1c1c;padding:9px 7px 11px 9px;box-shadow:inset 0 0 0 1px #343434}
.pbtn{position:absolute;top:-3px;height:3px}
.pb1{left:199px;width:54px;background:#333}
.pb2{left:309px;width:107px;background:#999}
.bezel{height:100%;display:flex;background:#000;border-radius:38px;border-top:2px solid #8d8d8d;border-bottom:2px solid #858585;border-left:2px solid #3a3a3a;border-right:2px solid #3a3a3a;overflow:hidden}
.bz-left{width:52px;flex:none;position:relative}
.notch{position:absolute;left:8px;top:129px;width:44px;height:137px;background:#0b0b0b;border-radius:24px 0 0 24px}
.camera{position:absolute;left:10px;width:20px;height:20px;border-radius:50%;background:#2b2924;box-shadow:inset 0 0 0 7px #2b2924,inset 0 0 0 10px #141414}
.c-a{top:16px}.c-b{top:103px}
.speaker{position:absolute;left:24px;top:48px;width:7px;height:42px;border-radius:3px;background:#1c1c1c}
.scr{width:697px;flex:none;margin:7px 0 1px;position:relative;display:flex;flex-direction:column;overflow:hidden;font-family:Roboto,sans-serif}
.sb{height:26px;flex:none;background:#00594c;display:flex;align-items:center;padding:0 13px;color:#fff;font-size:13.5px;font-weight:500;gap:10px}
.sb-a{width:9px;height:10px;background:#fff;color:#00594c;font-size:7px;font-weight:700;line-height:10px;text-align:center}
.sb-right{margin-left:auto;display:flex;align-items:center;gap:2px}
.sbw{width:14px;height:10px}.sbs{width:10px;height:10px}.sbb{width:7px;height:12px;margin-left:5px}
.ab{height:45px;flex:none;background:#008577;display:flex;align-items:center;justify-content:space-between;padding:0 19px 0 15px;color:#fff;font-size:13.2px;font-weight:500;box-shadow:0 1px 3px rgba(0,0,0,.3);position:relative}
.dots{width:4px;height:16px}
.content{flex:1;display:flex;flex-direction:column;gap:18.3px;padding-left:9px;background:linear-gradient(#346a8a,#8eacc4);min-height:0;overflow:hidden}
.pos-a{padding-top:9px}.pos-b{padding-top:5px}
.btn{width:82px;height:45px;flex:none;display:flex;align-items:center;justify-content:center;font-size:12.5px;font-weight:500;color:#17243a;box-shadow:0 1px 2px rgba(0,0,0,.25)}
.lt{background:#8eacc6}.dk{background:#2f6c8c}
.wide{width:88px;white-space:nowrap}
.fab{position:absolute;left:630px;top:316px;width:52px;height:52px;border-radius:50%;background:#d81b60;display:flex;align-items:center;justify-content:center;box-shadow:0 3px 6px rgba(0,0,0,.3)}
.mail{width:23px;height:17px}
.bz-nav{width:45px;flex:none;position:relative}
.nav-sq{position:absolute;left:15px;top:86px;width:14px;height:13px;background:#9a9a9a;border-radius:1px}
.nav-ci{position:absolute;left:16px;top:192px;width:12px;height:12px;border-radius:50%;background:#9a9a9a}
.nav-tr{position:absolute;left:15px;top:297px;border-right:13px solid #9a9a9a;border-top:8px solid transparent;border-bottom:8px solid transparent}
.bz-right{flex:1;background:#0a0a0a;position:relative;border-radius:0 34px 34px 0}
.rspeaker{position:absolute;left:26px;top:134px;width:7px;height:125px;background:#191919}

.emu{position:absolute;left:1766px;top:127px;width:68px;height:531px;background:#eeeff0;border:2px solid #000;display:flex;flex-direction:column;align-items:center}
.emu-top{height:28px;flex:none;width:100%;display:flex;align-items:center;justify-content:space-between;padding:4px 11px 0 13px;color:#607d8b;font-size:11px}
.emu-min{width:7px;height:2px;background:#90a4ae}
.eb{height:45px;flex:none;display:flex;align-items:center;justify-content:center}
```
